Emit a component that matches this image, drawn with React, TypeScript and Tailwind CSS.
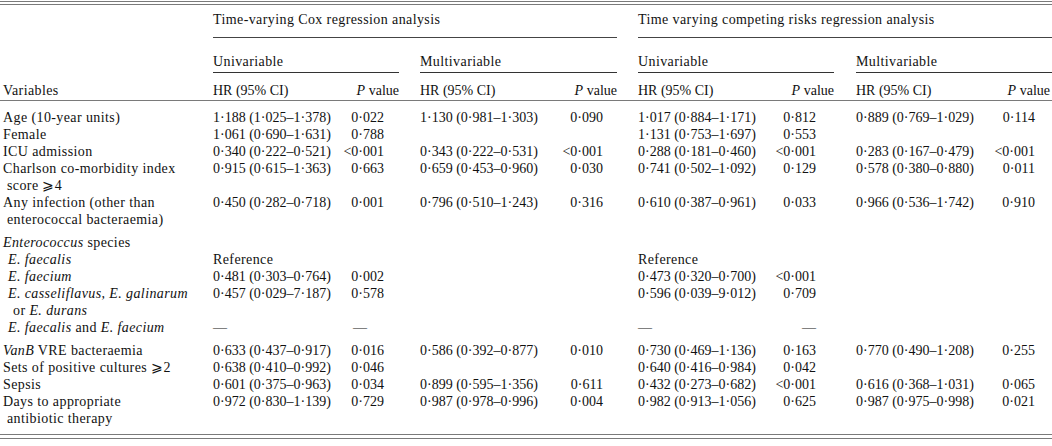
import React from 'react';

// 9 columns: label | Cox uni HR, P | Cox multi HR, P | CR uni HR, P | CR multi HR, P
const GRID = 'grid grid-cols-[213px_120px_87px_120px_98px_120px_98px_120px_76px]';

// right padding of the P value cells (body) per group
const P_PAD = ['pr-[36px]', 'pr-[35px]', 'pr-[40px]', 'pr-[17px]'];
// right padding of the P value header / the gap before the next group
const P_HEAD_PAD = ['pr-[21px]', 'pr-[21px]', 'pr-[22px]', 'pr-[2px]'];
const GROUP_PAD = ['pr-[21px]', 'pr-[21px]', 'pr-[22px]', 'pr-0'];

type Cell = string | null | { t: string; cls: string };

interface RowData {
  lines: React.ReactNode[];
  level?: 0 | 1;
  v: Cell[];
  gap?: boolean;
}

const I = ({ children }: { children: React.ReactNode }) => <i>{children}</i>;

const rows: RowData[] = [
  {
    lines: ['Age (10-year units)'],
    v: ['1·188 (1·025–1·378)', '0·022', '1·130 (0·981–1·303)', '0·090', '1·017 (0·884–1·171)', '0·812', '0·889 (0·769–1·029)', '0·114'],
  },
  {
    lines: ['Female'],
    v: ['1·061 (0·690–1·631)', '0·788', null, null, '1·131 (0·753–1·697)', '0·553', null, null],
  },
  {
    lines: ['ICU admission'],
    v: ['0·340 (0·222–0·521)', '<0·001', '0·343 (0·222–0·531)', '<0·001', '0·288 (0·181–0·460)', '<0·001', '0·283 (0·167–0·479)', '<0·001'],
  },
  {
    lines: ['Charlson co-morbidity index', 'score ⩾4'],
    v: ['0·915 (0·615–1·363)', '0·663', '0·659 (0·453–0·960)', '0·030', '0·741 (0·502–1·092)', '0·129', '0·578 (0·380–0·880)', '0·011'],
  },
  {
    lines: ['Any infection (other than', 'enterococcal bacteraemia)'],
    v: ['0·450 (0·282–0·718)', '0·001', '0·796 (0·510–1·243)', '0·316', '0·610 (0·387–0·961)', '0·033', '0·966 (0·536–1·742)', '0·910'],
  },
  {
    lines: [<><I>Enterococcus</I> species</>],
    v: [null, null, null, null, null, null, null, null],
    gap: true,
  },
  {
    lines: [<I>E. faecalis</I>],
    level: 1,
    v: ['Reference', null, null, null, 'Reference', null, null, null],
  },
  {
    lines: [<I>E. faecium</I>],
    level: 1,
    v: ['0·481 (0·303–0·764)', '0·002', null, null, '0·473 (0·320–0·700)', '<0·001', null, null],
  },
  {
    lines: [<I>E. casseliflavus, E. galinarum</I>, <>or <I>E. durans</I></>],
    level: 1,
    v: ['0·457 (0·029–7·187)', '0·578', null, null, '0·596 (0·039–9·012)', '0·709', null, null],
  },
  {
    lines: [<><I>E. faecalis</I> and <I>E. faecium</I></>],
    level: 1,
    v: ['—', { t: '—', cls: 'pr-[53px]' }, null, null, '—', '—', null, null],
  },
  {
    lines: [<><I>VanB</I> VRE bacteraemia</>],
    v: ['0·633 (0·437–0·917)', '0·016', '0·586 (0·392–0·877)', '0·010', '0·730 (0·469–1·136)', '0·163', '0·770 (0·490–1·208)', '0·255'],
    gap: true,
  },
  {
    lines: ['Sets of positive cultures ⩾2'],
    v: ['0·638 (0·410–0·992)', '0·046', null, null, '0·640 (0·416–0·984)', '0·042', null, null],
  },
  {
    lines: ['Sepsis'],
    v: ['0·601 (0·375–0·963)', '0·034', '0·899 (0·595–1·356)', '0·611', '0·432 (0·273–0·682)', '<0·001', '0·616 (0·368–1·031)', '0·065'],
  },
  {
    lines: ['Days to appropriate', 'antibiotic therapy'],
    v: ['0·972 (0·830–1·139)', '0·729', '0·987 (0·978–0·996)', '0·004', '0·982 (0·913–1·056)', '0·625', '0·987 (0·975–0·998)', '0·021'],
  },
];

const BodyRow = ({ row }: { row: RowData }) => {
  const first = row.level === 1 ? 'pl-[8px]' : 'pl-[3px]';
  const rest = row.level === 1 ? 'pl-[13px]' : 'pl-[7px]';
  return (
    <div className={`${GRID} ${row.gap ? 'pt-[6px]' : ''}`}>
      <div className="tracking-[0.4px]">
        {row.lines.map((l, i) => (
          <div key={i} className={i === 0 ? first : rest}>
            {l}
          </div>
        ))}
      </div>
      {row.v.map((c, i) => {
        const isP = i % 2 === 1;
        const g = Math.floor(i / 2);
        if (c && typeof c === 'object') {
          return (
            <div key={i} className={`text-right ${c.cls}`}>
              {c.t}
            </div>
          );
        }
        return (
          <div key={i} className={isP ? `text-right ${P_PAD[g]}` : c === 'Reference' ? 'tracking-[0.4px]' : ''}>
            {c}
          </div>
        );
      })}
    </div>
  );
};

export default function App() {
  const subs = ['Univariable', 'Multivariable', 'Univariable', 'Multivariable'];
  return (
    <div
      className="w-[1052px] h-[446px] bg-white text-[#111] text-[14px] leading-[17px] whitespace-nowrap overflow-hidden"
      style={{ fontFamily: '"Liberation Serif", "DejaVu Serif", serif' }}
    >
      {/* top double rule */}
      <div className="mt-[1px] h-[4px] border-y border-[#7a7a7a]" />

      {/* group header */}
      <div className={`${GRID} tracking-[0.4px]`}>
        <div />
        <div className={`col-span-4 ${GROUP_PAD[0]}`}>
          <div className="pt-[6px] pb-[9px] border-b border-[#444]">Time-varying Cox regression analysis</div>
        </div>
        <div className={`col-span-4 ${GROUP_PAD[3]}`}>
          <div className="pt-[6px] pb-[9px] border-b border-[#444]">Time varying competing risks regression analysis</div>
        </div>
      </div>

      {/* uni / multi header */}
      <div className={`${GRID} tracking-[0.4px]`}>
        <div />
        {subs.map((s, i) => (
          <div key={i} className={`col-span-2 ${GROUP_PAD[i]}`}>
            <div className="pt-[15px] pb-[2px] border-b border-[#333]">{s}</div>
          </div>
        ))}
      </div>

      {/* column header */}
      <div className={`${GRID} border-b border-[#7a7a7a]`}>
        <div className="pl-[3px] pt-[9px] pb-px tracking-[0.4px]">Variables</div>
        {subs.map((_, i) => (
          <React.Fragment key={i}>
            <div className="pt-[9px] pb-px">HR (95% CI)</div>
            <div className={`pt-[9px] pb-px text-right ${P_HEAD_PAD[i]}`}>
              <i>P</i> value
            </div>
          </React.Fragment>
        ))}
      </div>

      {/* body */}
      <div className="pt-[8px] pb-[7px]">
        {rows.map((r, i) => (
          <BodyRow key={i} row={r} />
        ))}
      </div>

      {/* bottom double rule */}
      <div className="h-[5px] border-y border-[#7a7a7a]" />
    </div>
  );
}
